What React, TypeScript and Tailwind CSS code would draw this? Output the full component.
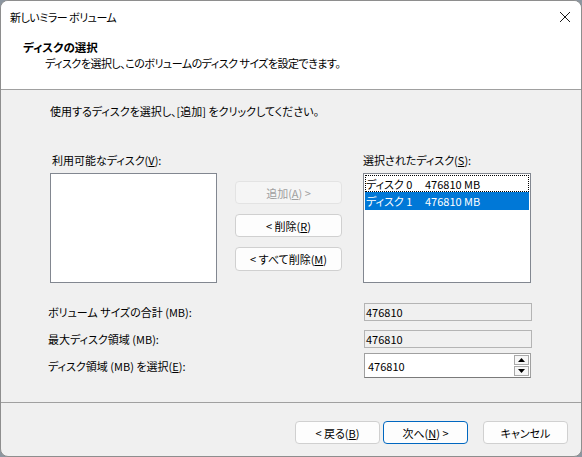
import type { ReactNode } from "react";

type BtnProps = {
  children: ReactNode;
  disabled?: boolean;
  primary?: boolean;
  className?: string;
};

function cn(...classes: Array<string | false | null | undefined>) {
  return classes.filter(Boolean).join(" ");
}

function Btn({ children, disabled, primary, className }: BtnProps) {
  return (
    <div
      className={cn(
        "flex items-center justify-center rounded-[4px] border",
        disabled
          ? "border-[#e3e3e3] bg-[#f5f5f5] text-[#a0a0a0]"
          : primary
          ? "border-[#0067c0] bg-[#fdfdfd]"
          : "border-[#d0d0d0] bg-[#fdfdfd]",
        className
      )}
    >
      {children}
    </div>
  );
}

function CloseIcon() {
  return (
    <svg width="12" height="12" viewBox="0 0 12 12" className="block">
      <path d="M1 1 L11 11 M11 1 L1 11" stroke="#1a1a1a" strokeWidth="1" fill="none" />
    </svg>
  );
}

function SpinArrow({ up }: { up?: boolean }) {
  return (
    <svg width="7" height="4" viewBox="0 0 7 4" className="block">
      {up ? <path d="M0 4 L3.5 0 L7 4 Z" fill="#000" /> : <path d="M0 0 L3.5 4 L7 0 Z" fill="#000" />}
    </svg>
  );
}

export default function App() {
  return (
    <div className="h-[457px] w-[582px] bg-[#8c96a0] font-['Noto_Sans_CJK_JP','Noto_Sans',sans-serif] text-[11px] leading-[16px] text-black [font-feature-settings:'palt']">
      <div className="flex h-full w-full flex-col overflow-hidden rounded-[8px] border border-[#8e8e8e] bg-[#f0f0f0]">
        {/* title bar */}
        <div className="flex h-[31px] shrink-0 items-center justify-between bg-white pl-[9px] pr-[10px]">
          <span className="tracking-[-0.5px]">新しいミラー ボリューム</span>
          <CloseIcon />
        </div>

        {/* header */}
        <div className="h-[58px] shrink-0 border-b border-[#a0a0a0] bg-white pl-[22px] pt-[8px]">
          <div className="text-[11.5px] font-bold leading-[15px]">ディスクの選択</div>
          <div className="pl-[22px] tracking-[-0.5px]">ディスクを選択し、このボリュームのディスク サイズを設定できます。</div>
        </div>

        {/* body */}
        <div className="flex-1 pl-[49px] pt-[13px]">
          <div>使用するディスクを選択し、[追加] をクリックしてください。</div>

          <div className="mt-[33px] flex">
            <div className="w-[167px]">
              <div className="pl-[2px]">
                利用可能なディスク(<u>V</u>):
              </div>
              <div className="mt-[5px] h-[110px] border border-[#828790] bg-white" />
            </div>

            <div className="ml-[18px] mt-[29px] flex w-[107px] flex-col gap-[10px]">
              <Btn disabled className="h-[23px]">
                追加(<u>A</u>) &gt;
              </Btn>
              <Btn className="h-[23px]">
                &lt; 削除(<u>R</u>)
              </Btn>
              <Btn className="h-[24px]">
                &lt; すべて削除(<u>M</u>)
              </Btn>
            </div>

            <div className="ml-[21px] w-[168px]">
              <div>
                選択されたディスク(<u>S</u>):
              </div>
              <div className="mt-[5px] h-[110px] border border-[#828790] bg-white p-px">
                <div className="flex h-[17px] items-center border border-dotted border-black">
                  <span className="w-[59px]">ディスク 0</span>
                  <span>476810 MB</span>
                </div>
                <div className="flex h-[18px] items-center bg-[#0078d7] pl-px text-white">
                  <span className="w-[59px]">ディスク 1</span>
                  <span>476810 MB</span>
                </div>
              </div>
            </div>
          </div>

          <div className="mt-[20px] flex flex-col">
            <div className="flex h-[18px] items-center">
              <div className="-ml-[2px] w-[316px]">ボリューム サイズの合計 (MB):</div>
              <div className="flex h-[18px] w-[168px] items-center border border-[#b4b4b4] bg-[#f0f0f0] pl-px">476810</div>
            </div>
            <div className="mt-[9px] flex h-[18px] items-center">
              <div className="-ml-[2px] w-[316px]">最大ディスク領域 (MB):</div>
              <div className="flex h-[18px] w-[168px] items-center border border-[#b4b4b4] bg-[#f0f0f0] pl-px">476810</div>
            </div>
            <div className="mt-[5px] flex h-[25px] items-center">
              <div className="-ml-[2px] w-[316px]">
                ディスク領域 (MB) を選択(<u>E</u>):
              </div>
              <div className="flex h-[25px] w-[167px] items-center border border-[#a0a0a0] border-b-[#7a7a7a] bg-white pl-[3px] pr-px">
                <span className="flex-1">476810</span>
                <div className="flex h-[21px] w-[15px] flex-col gap-px">
                  <div className="flex flex-1 items-center justify-center border border-[#a9a9a9] bg-[#f7f7f7]">
                    <SpinArrow up />
                  </div>
                  <div className="flex flex-1 items-center justify-center border border-[#a9a9a9] bg-[#f7f7f7]">
                    <SpinArrow />
                  </div>
                </div>
              </div>
            </div>
          </div>
        </div>

        {/* footer */}
        <div className="flex h-[54px] shrink-0 items-start justify-end border-t border-[#a0a0a0] pr-[13px] pt-[18px]">
          <Btn className="h-[23px] w-[85px]">
            &lt; 戻る(<u>B</u>)
          </Btn>
          <Btn primary className="ml-[3px] h-[23px] w-[85px]">
            次へ(<u>N</u>) &gt;
          </Btn>
          <Btn className="ml-[15px] h-[23px] w-[85px]">キャンセル</Btn>
        </div>
      </div>
    </div>
  );
}
